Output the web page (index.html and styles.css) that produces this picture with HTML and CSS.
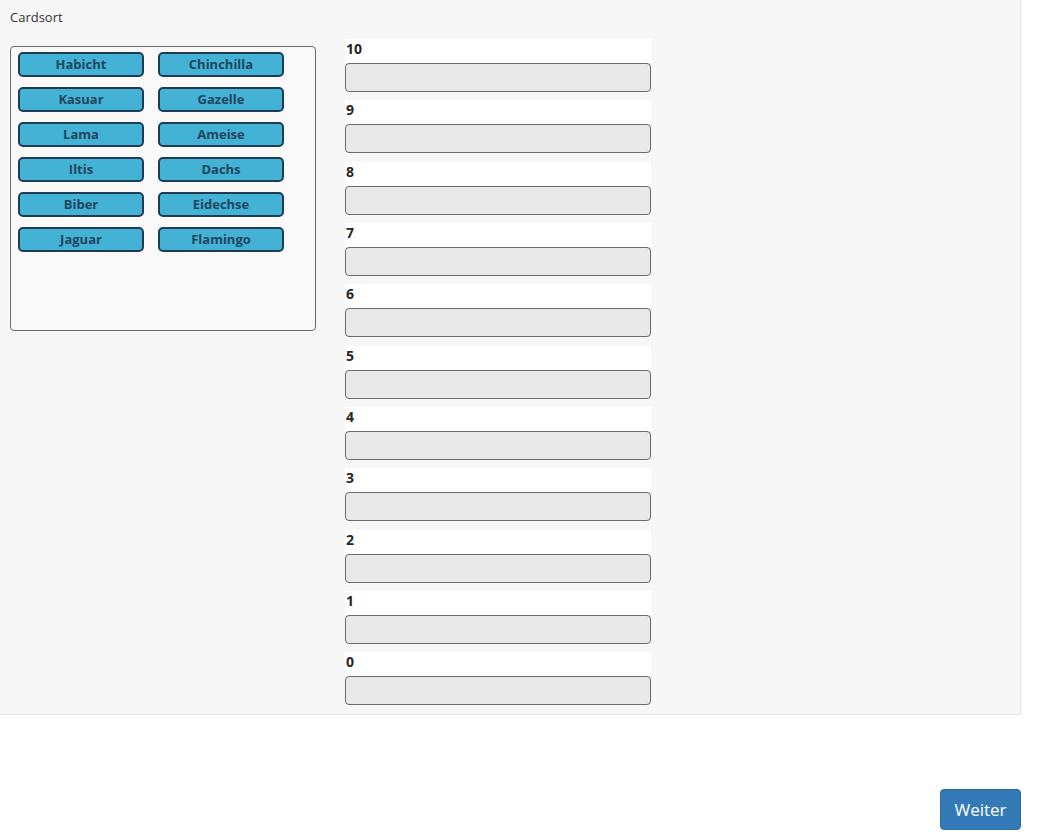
FILE: index.html
```html
<!DOCTYPE html>
<html lang="de">
  <head>
    <meta charset="UTF-8" />
    <meta name="viewport" content="width=device-width, initial-scale=1.0" />
    <title>Cardsort</title>
    <link rel="stylesheet" href="styles.css">
  </head>
  <body>
    <div class="question">
      <div class="question-title">Cardsort</div>

      <div class="sort-area">
        <div class="card-pool">
          <div class="card">Habicht</div>
          <div class="card">Chinchilla</div>
          <div class="card">Kasuar</div>
          <div class="card">Gazelle</div>
          <div class="card">Lama</div>
          <div class="card">Ameise</div>
          <div class="card">Iltis</div>
          <div class="card">Dachs</div>
          <div class="card">Biber</div>
          <div class="card">Eidechse</div>
          <div class="card">Jaguar</div>
          <div class="card">Flamingo</div>
        </div>

        <div class="buckets">
          <div class="bucket"><div class="bucket-label">10</div><div class="bucket-drop"></div></div>
          <div class="bucket"><div class="bucket-label">9</div><div class="bucket-drop"></div></div>
          <div class="bucket"><div class="bucket-label">8</div><div class="bucket-drop"></div></div>
          <div class="bucket"><div class="bucket-label">7</div><div class="bucket-drop"></div></div>
          <div class="bucket"><div class="bucket-label">6</div><div class="bucket-drop"></div></div>
          <div class="bucket"><div class="bucket-label">5</div><div class="bucket-drop"></div></div>
          <div class="bucket"><div class="bucket-label">4</div><div class="bucket-drop"></div></div>
          <div class="bucket"><div class="bucket-label">3</div><div class="bucket-drop"></div></div>
          <div class="bucket"><div class="bucket-label">2</div><div class="bucket-drop"></div></div>
          <div class="bucket"><div class="bucket-label">1</div><div class="bucket-drop"></div></div>
          <div class="bucket"><div class="bucket-label">0</div><div class="bucket-drop"></div></div>
        </div>
      </div>
    </div>

    <div class="nav">
      <button class="btn-next">Weiter</button>
    </div>
  </body>
</html>
```

FILE: styles.css
```css
* {
  margin: 0;
  padding: 0;
  box-sizing: border-box;
}

body {
  font-family: "Open Sans", "Noto Sans", sans-serif;
  background: #fff;
  color: #333;
}

.question {
  width: 1021px;
  background: #f7f7f7;
  border-right: 1px solid #e3e3e3;
  border-bottom: 1px solid #e3e3e3;
  padding: 8px 10px 9px;
}

.question-title {
  font-size: 13px;
  line-height: 18px;
  color: #333;
}

.sort-area {
  display: flex;
  align-items: flex-start;
  margin-top: 13px;
}

.card-pool {
  width: 306px;
  height: 285px;
  margin-top: 7px;
  border: 1px solid #6b6b6b;
  border-radius: 4px;
  background: #f9f9f9;
  display: flex;
  flex-wrap: wrap;
  align-content: flex-start;
}

.card {
  width: 126px;
  height: 25px;
  margin: 5px 7px;
  background: #44b2d4;
  border: 2px solid #1f3c54;
  border-radius: 5px;
  color: #1f4660;
  font-size: 13px;
  font-weight: bold;
  line-height: 21px;
  text-align: center;
}

.buckets {
  width: 306px;
  margin-left: 29px;
}

.bucket {
  margin-bottom: 8.33px;
}

.bucket:last-child {
  margin-bottom: 0;
}

.bucket-label {
  height: 24px;
  background: #fff;
  font-size: 14px;
  font-weight: bold;
  line-height: 20px;
  padding-left: 1px;
  color: #262626;
}

.bucket-drop {
  height: 29px;
  background: #e9e9e9;
  border: 1px solid #6b6b6b;
  border-radius: 4px;
}

.nav {
  width: 1021px;
  margin-top: 74px;
  display: flex;
  justify-content: flex-end;
}

.btn-next {
  width: 81px;
  height: 41px;
  background: #337ab7;
  border: 1px solid #2e6da4;
  border-radius: 4px;
  color: #fff;
  font-family: "Open Sans", "Noto Sans", sans-serif;
  font-size: 17px;
  cursor: pointer;
}
```
